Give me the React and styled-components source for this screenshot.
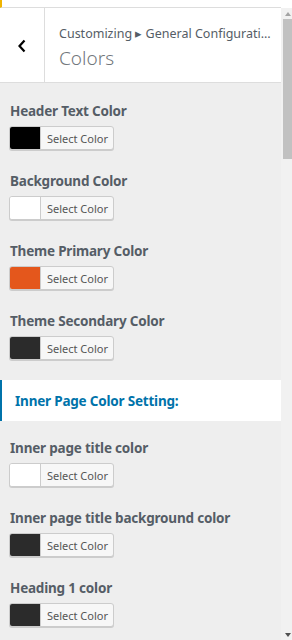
import styled, { createGlobalStyle } from "styled-components"

const Global = createGlobalStyle`
    html, body { margin: 0; padding: 0; background: #fff; }
    body { font-family: "Noto Sans", "Open Sans", sans-serif; }
    * { box-sizing: border-box; }
`

const Page = styled.div`
    width: 292px;
    height: 640px;
    overflow: hidden;
    display: flex;
    flex-direction: column;
`
const TopStrip = styled.div`
    height: 8px;
    flex: none;
    background: #fff;
    border-left: 2px solid #f0b400;
    border-bottom: 1px solid #ddd;
    margin-right: 11px;
`
const Body = styled.div`
    flex: 1;
    display: flex;
    min-height: 0;
`
const Panel = styled.div`
    flex: 1;
    background: #eee;
    display: flex;
    flex-direction: column;
    min-width: 0;
`
const Header = styled.div`
    height: 75px;
    flex: none;
    display: flex;
    background: #fff;
    border-bottom: 1px solid #ddd;
`
const Back = styled.div`
    width: 45px;
    border-right: 1px solid #ddd;
    display: flex;
    align-items: center;
    justify-content: center;
    padding-top: 2px;
`
const Titles = styled.div`
    flex: 1;
    min-width: 0;
    padding: 16px 0 0 14px;
    color: #555d66;
`
const Crumb = styled.div`
    font-size: 12.5px;
    line-height: 20px;
    white-space: nowrap;
    overflow: hidden;
    text-overflow: ellipsis;
    padding-right: 10px;
`
const Title = styled.div`
    font-size: 19px;
    font-weight: 300;
    line-height: 26px;
    margin-top: 1px;
    color: #72777c;
`
const List = styled.div`
    padding: 17px 0 0 0;
    display: flex;
    flex-direction: column;
`
const Item = styled.div`
    padding: 1px 9px 0;
    height: 70px;
`
const Label = styled.div`
    font-size: 13.5px;
    font-weight: 700;
    color: #555d66;
    line-height: 20px;
    margin-bottom: 5px;
    padding-left: 1px;
    letter-spacing: -0.2px;
`
const Picker = styled.div`
    display: flex;
    width: 105px;
    height: 24px;
    border: 1px solid #ccc;
    border-radius: 3px;
    box-shadow: 0 1px 0 #ccc;
    background: #f7f7f7;
    overflow: hidden;
`
const Swatch = styled.div`
    width: 31px;
    background: ${p => p.color};
    border-right: 1px solid #ccc;
`
const PickLabel = styled.div`
    flex: 1;
    font-size: 11px;
    color: #555;
    display: flex;
    align-items: center;
    justify-content: center;
    padding-left: 1px;
`
const Section = styled.div`
    background: #fff;
    border-left: 2px solid #0073aa;
    height: 41px;
    margin: 0 0 16px;
    display: flex;
    align-items: center;
    padding-left: 13px;
    font-size: 13.5px;
    font-weight: 700;
    color: #0073aa;
    letter-spacing: -0.2px;
`
const Scrollbar = styled.div`
    width: 11px;
    flex: none;
    background: #f1f1f1;
    display: flex;
    flex-direction: column;
    align-items: flex-end;
`
const Arrow = styled.div`
    width: 9px;
    height: 11px;
    display: flex;
    align-items: center;
    justify-content: center;
    margin-top: ${p => p.down ? "auto" : "0"};
    &::after {
        content: "";
        border-left: 3px solid transparent;
        border-right: 3px solid transparent;
        ${p => p.down ? "border-top: 4px solid #505050;" : "border-bottom: 4px solid #a3a3a3;"}
    }
`
const Thumb = styled.div`
    width: 9px;
    height: 140px;
    background: #c1c1c1;
`

const ColorItem = ({ label, color }) => (
    <Item>
        <Label>{label}</Label>
        <Picker>
            <Swatch color={color} />
            <PickLabel>Select Color</PickLabel>
        </Picker>
    </Item>
)

const App = () => {
    return (
        <Page>
            <Global />
            <TopStrip />
            <Body>
                <Panel>
                    <Header>
                        <Back>
                            <svg width="10" height="14" viewBox="0 0 10 14">
                                <path d="M7.5 1.5 L2.5 7 L7.5 12.5" fill="none" stroke="#000" strokeWidth="2.2" />
                            </svg>
                        </Back>
                        <Titles>
                            <Crumb>Customizing ▸ General Configuration</Crumb>
                            <Title>Colors</Title>
                        </Titles>
                    </Header>
                    <List>
                        <ColorItem label="Header Text Color" color="#000" />
                        <ColorItem label="Background Color" color="#fff" />
                        <ColorItem label="Theme Primary Color" color="#e4571c" />
                        <ColorItem label="Theme Secondary Color" color="#2b2b2b" />
                        <Section>Inner Page Color Setting:</Section>
                        <ColorItem label="Inner page title color" color="#fff" />
                        <ColorItem label="Inner page title background color" color="#2b2b2b" />
                        <ColorItem label="Heading 1 color" color="#2b2b2b" />
                    </List>
                </Panel>
                <Scrollbar>
                    <Arrow />
                    <Thumb />
                    <Arrow down />
                </Scrollbar>
            </Body>
        </Page>
    )
}

export default App
